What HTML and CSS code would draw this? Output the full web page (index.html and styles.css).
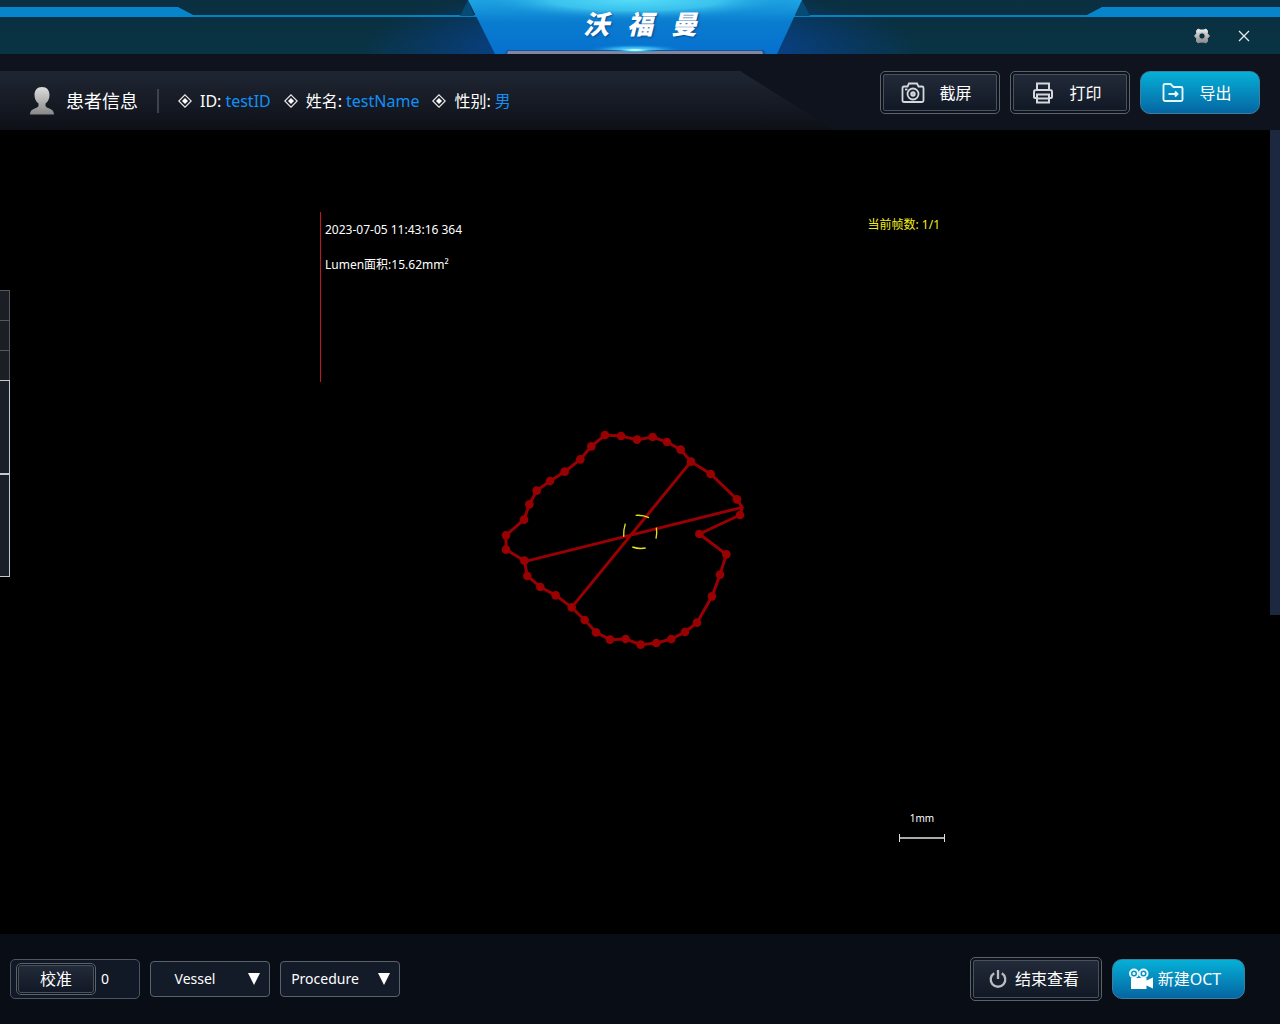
FILE: index.html
```html
<!DOCTYPE html>
<html lang="zh-CN">
<head>
<meta charset="utf-8">
<meta name="viewport" content="width=device-width, initial-scale=1">
<title>沃福曼 OCT</title>
<link rel="stylesheet" href="styles.css">
</head>
<body>
<header class="titlebar">
  <div class="wing wing-left"></div>
  <div class="plate">
    <svg class="plate-art" viewBox="0 0 360 54" aria-hidden="true">
      <defs>
        <linearGradient id="plate" x1="0" y1="0" x2="0" y2="1"><stop offset="0" stop-color="#1fa8e4"/><stop offset=".4" stop-color="#0a7dcf"/><stop offset="1" stop-color="#0670cf"/></linearGradient>
        <radialGradient id="sky"><stop offset="0" stop-color="#55dcf8"/><stop offset=".5" stop-color="#40c8f0" stop-opacity=".85"/><stop offset="1" stop-color="#0878cd" stop-opacity="0"/></radialGradient>
        <radialGradient id="flare"><stop offset="0" stop-color="#fff"/><stop offset=".25" stop-color="#9cf0ff"/><stop offset=".55" stop-color="#27b4ef" stop-opacity=".7"/><stop offset="1" stop-color="#0670cf" stop-opacity="0"/></radialGradient>
      </defs>
      <path d="M8 0 0 16H14Z" fill="#064a78"/><path d="M342 0l8 16h-15Z" fill="#064a78"/>
      <path d="M8 0H342L317 54H35Z" fill="url(#plate)"/>
      <ellipse cx="175" cy="0" rx="170" ry="21" fill="url(#sky)"/>
      <ellipse cx="175" cy="50" rx="50" ry="6" fill="url(#flare)"/>
      <path d="M45 54l2-4H304l2 4Z" fill="#17529a"/><path d="M47 54l1-3H302l1 3Z" fill="#82879f"/>
      <ellipse cx="175" cy="50" rx="26" ry="3" fill="url(#flare)"/>
    </svg>
    <h1 class="brand"><span>沃</span><span>福</span><span>曼</span></h1>
  </div>
  <div class="wing wing-right">
    <button class="icon-button" type="button" aria-label="设置">
      <svg width="16" height="16" viewBox="0 0 16 16"><defs><linearGradient id="gear" x1="0" y1="0" x2="0" y2="1"><stop offset="0" stop-color="#eee"/><stop offset="1" stop-color="#888"/></linearGradient></defs><path fill="url(#gear)" stroke="url(#gear)" stroke-linejoin="round" fill-rule="evenodd" d="M4 1 6 2H10L12 1 13.500 3 13.300 5.500 15.400 8 13.300 10.500 13.500 13.500 12 15 10 14.200H6L4 15 2.500 13.500 2.700 10.500 .6 8 2.700 5.500 2.500 3ZM8 4.800a3.200 3.200 0 1 0 0 6.400a3.200 3.200 0 1 0 0-6.400Z"/></svg>
    </button>
    <button class="icon-button" type="button" aria-label="关闭">
      <svg width="12" height="12" viewBox="0 0 12 12"><path d="M1 1l10 10M11 1 1 11" stroke="#e4ecef" stroke-width="1.300"/></svg>
    </button>
  </div>
</header>

<section class="toolbar">
  <div class="patient">
    <svg width="26" height="28" viewBox="0 0 26 28" aria-hidden="true"><defs><linearGradient id="person" x1="0" y1="0" x2="0" y2="1"><stop offset="0" stop-color="#ddd"/><stop offset="1" stop-color="#888"/></linearGradient></defs><path fill="url(#person)" d="M13 0C8 0 5.500 3.500 5.500 8c0 4 1.500 6.500 4 8.500V19C8 22 1 21 1 27.500H25C25 21 18 22 16.500 19V16.500C19 14.500 20.500 12 20.500 8 20.500 3.500 18 0 13 0Z"/></svg>
    <h2 class="patient-title">患者信息</h2>
    <dl class="facts">
      <div class="fact"><svg class="diamond" viewBox="0 0 14 14" aria-hidden="true"><path d="M7 .8 13.200 7 7 13.200 .8 7Z" fill="none" stroke="#e8e8ea" stroke-width="1.200"/><path d="M7 4l3 3-3 3-3-3Z" fill="#fff"/></svg><dt>ID:</dt><dd>testID</dd></div>
      <div class="fact"><svg class="diamond" viewBox="0 0 14 14" aria-hidden="true"><path d="M7 .8 13.200 7 7 13.200 .8 7Z" fill="none" stroke="#e8e8ea" stroke-width="1.200"/><path d="M7 4l3 3-3 3-3-3Z" fill="#fff"/></svg><dt>姓名:</dt><dd>testName</dd></div>
      <div class="fact"><svg class="diamond" viewBox="0 0 14 14" aria-hidden="true"><path d="M7 .8 13.200 7 7 13.200 .8 7Z" fill="none" stroke="#e8e8ea" stroke-width="1.200"/><path d="M7 4l3 3-3 3-3-3Z" fill="#fff"/></svg><dt>性别:</dt><dd>男</dd></div>
    </dl>
  </div>
  <div class="actions">
    <button class="button framed action" type="button">
      <svg width="24" height="22" viewBox="0 0 24 22" fill="none" stroke="#d5d8dd" stroke-width="1.800"><path d="M3 4.500H6.500L8 1.500h8l1.500 3H21q1.500 0 1.500 1.500V18.500Q22.500 20 21 20H3Q1.500 20 1.500 18.500V6Q1.500 4.500 3 4.500Z"/><circle cx="12" cy="12" r="5.500"/><circle cx="12" cy="12" r="1.800" fill="#aeb4bc"/><path d="M4 7.500h2.500"/></svg>
      截屏
    </button>
    <button class="button framed action" type="button">
      <svg width="24" height="22" viewBox="0 0 24 22" fill="none" stroke="#d5d8dd" stroke-width="2"><path d="M6 8V1.500h12V8M6 16H4Q3 16 3 15V10Q3 8 5 8h14Q21 8 21 10v5q0 1-1 1h-2"/><path d="M6 12.500h12V20.500H6ZM6 16.500h12"/></svg>
      打印
    </button>
    <button class="button primary action" type="button">
      <svg width="24" height="22" viewBox="0 0 24 22" fill="none" stroke="#e5f7fc" stroke-width="1.900"><path d="M4 2H9.500L12.500 5H20q1.500 0 1.500 1.500V17.500Q21.500 19 20 19H4Q2.500 19 2.500 17.500v-14Q2.500 2 4 2Z"/><path d="M7.500 12h9M14 9.500l2.500 2.500-2.500 2.500"/></svg>
      导出
    </button>
  </div>
</section>

<main class="stage">
  <aside class="drawer" aria-label="侧栏">
    <div class="slot"></div><div class="slot"></div><div class="slot"></div>
    <div class="pane"></div><div class="pane"></div>
  </aside>
  <figure class="scan">
    <svg class="scan-drawing" viewBox="0 0 640 640" role="img" aria-label="管腔轮廓">
      <defs><marker id="dot" markerUnits="userSpaceOnUse" markerWidth="28" markerHeight="28" refX="14" refY="14"><circle cx="14" cy="14" r="13" fill="#980002"/></marker></defs>
      <path d="M.5 0V170" stroke="#c8141c"/>
      <svg x="170" y="208" width="270" height="240" viewBox="0 0 810 720" fill="none" stroke="#980002" stroke-width="9">
        <polyline marker-start="url(#dot)" marker-mid="url(#dot)" marker-end="url(#dot)" points="741,238 662,162 603,125 572,89 531,66 488,51 441,59 393,48 345,45 304,79 271,118 224,155 180,183 140,212 118,253 102,299 48,346 48,389 103,422 112,468 151,501 197,526 245,562 284,600 318,637 360,659 407,657 452,674 499,669 544,657 585,636 621,608 666,529 690,464 709,403 628,342 750,285"/>
        <path d="M741 238 757 262 750 285M757 262 103 425M603 125 245 562" stroke-linejoin="round"/>
        <path stroke="#e6e020" stroke-width="4" d="M437 286Q458 284 477 293M406 311Q400 330 401 350M499 323Q502 340 498 356M427 381Q447 388 467 384"/>
      </svg>
    </svg>
    <div class="scan-notes">
      <div class="scan-top">
        <div class="readings"><time datetime="2023-07-05T11:43:16.364">2023-07-05 11:43:16 364</time><span>Lumen面积:15.62mm²</span></div>
        <div class="frames">当前帧数: 1/1</div>
      </div>
      <div class="scale"><span>1mm</span><div class="scale-bar"></div></div>
    </div>
  </figure>
  <div class="rail"></div>
</main>

<footer class="controls">
  <div class="calibrate">
    <button class="button framed calibrate-button" type="button">校准</button>
    <input class="calibrate-value" type="text" value="0" aria-label="校准值">
  </div>
  <div class="picker"><select aria-label="Vessel"><option>Vessel</option></select></div>
  <div class="picker"><select aria-label="Procedure"><option>Procedure</option></select></div>
  <div class="session">
    <button class="button framed finish" type="button">
      <svg width="18" height="20" viewBox="0 0 18 20" fill="none" stroke="#b9bcc2" stroke-width="2.300"><path d="M5.200 4.200A7.300 7.300 0 1 0 12.800 4.200M9 1V10"/></svg>
      结束查看
    </button>
    <button class="button primary start" type="button">
      <svg width="26" height="22" viewBox="0 0 26 22"><g fill="none" stroke="#eefaff" stroke-width="2"><circle cx="6" cy="5.500" r="4"/><circle cx="15.500" cy="5.500" r="4"/></g><g fill="#fff"><circle cx="6" cy="5.500" r="1.500"/><circle cx="15.500" cy="5.500" r="1.500"/><path d="M3 10H18.500V12.500L25 9.500V20.500L18.500 17.500V21H3Z"/></g></svg>
      新建OCT
    </button>
  </div>
</footer>
</body>
</html>
```

FILE: styles.css
```css
* { box-sizing: border-box; }

body {
  margin: 0;
  min-height: 100vh;
  display: flex;
  flex-direction: column;
  background: #000;
  color: #fff;
  font: 16px/24px "Noto Sans", "Noto Sans CJK SC", sans-serif;
}

svg { display: block; flex: none; }
button, input, select { font: inherit; color: inherit; margin: 0; }
h1, h2, dl, dd, figure { margin: 0; }

/* Title bar */
.titlebar {
  height: 54px;
  display: grid;
  grid-template-columns: 1fr 360px 1fr;
  background:
    linear-gradient(#0682c4, #0682c4) 0 15px / 100% 2px no-repeat,
    radial-gradient(ellipse 280px 70px at 50% 100%, #08449a 0, #083f80 50%, transparent 100%),
    linear-gradient(#0a2f40, #093344);
}
.wing { display: flex; }
.wing::before {
  content: "";
  width: 195px;
  height: 10px;
  margin-top: 7px;
  background: #0785cc;
  clip-path: polygon(0 0, 178px 0, 195px 90%, 195px 100%, 0 100%);
}
.wing-right {
  display: grid;
  grid-template-columns: 1fr 32px 32px;
  column-gap: 10px;
  padding-right: 20px;
  align-items: end;
}
.wing-right::before {
  grid-area: 1 / 1 / 2 / 4;
  justify-self: end;
  align-self: start;
  margin-right: -20px;
  clip-path: polygon(17px 0, 100% 0, 100% 100%, 0 100%, 0 90%);
}
.icon-button {
  grid-row: 1;
  height: 36px;
  padding: 0;
  border: 0;
  background: none;
  display: grid;
  place-items: center;
}
.icon-button:first-of-type { grid-column: 2; }
.icon-button:last-of-type { grid-column: 3; }
.plate { display: grid; }
.plate-art { grid-area: 1 / 1; width: 360px; height: 54px; }
.brand {
  grid-area: 1 / 1;
  z-index: 1;
  display: flex;
  justify-content: center;
  gap: 18px;
  font: italic 900 26px/46px "Noto Sans CJK SC", sans-serif;
  text-shadow: 1px 1px 2px #0a4a90;
}

/* Patient strip and actions */
.toolbar {
  height: 76px;
  padding: 17px 20px 0 0;
  display: flex;
  justify-content: space-between;
  background: #0e131d;
}
.patient {
  flex: 0 1 834px;
  display: flex;
  align-items: center;
  padding-left: 29px;
  background: linear-gradient(#1f2633, #0e1017);
  clip-path: polygon(0 0, calc(100% - 94px) 0, 100% 100%, 0 100%);
}
.patient-title {
  margin-left: 11px;
  padding-right: 19px;
  border-right: 2px solid #3d424c;
  font-size: 18px;
  font-weight: 400;
}
.facts { display: flex; gap: 13px; margin-left: 19px; }
.fact { display: flex; align-items: center; gap: 4px; white-space: nowrap; }
.fact dd { color: #1390f5; }
.diamond { width: 14px; height: 14px; margin-right: 4px; }
.actions { display: flex; gap: 10px; }

.button {
  display: flex;
  align-items: center;
  justify-content: center;
  padding: 0;
  white-space: nowrap;
}
.framed {
  border: 1px solid #5c626c;
  border-radius: 5px;
  background: linear-gradient(#232c3b, #101724) padding-box;
  outline: 1px solid #4b515b;
  outline-offset: -4px;
  box-shadow: inset 0 0 0 2px #0d121b;
}
.primary {
  border: 1px solid #3d7f9c;
  border-radius: 10px;
  background: linear-gradient(#05b0d6, #0565a3);
}
.action { width: 120px; height: 43px; gap: 14px; padding-right: 7px; }

/* Scan area */
.stage {
  flex: 1;
  display: grid;
  grid-template-columns: 10px 1fr 10px;
}
.drawer { padding-top: 160px; }
.slot, .pane {
  background: #1b1e24;
  border: solid #55575c;
  border-width: 1px 1px 0 0;
  height: 30px;
}
.pane {
  height: 94px;
  background: #1a2027;
  border: 1px solid #c5c9d2;
  border-left: 0;
}
.pane:last-child { height: 103px; }
.rail { height: 485px; background: #1c2740; }
.scan {
  width: 640px;
  max-width: 100%;
  aspect-ratio: 1;
  display: grid;
  place-self: center;
}
.scan-drawing { grid-area: 1 / 1; width: 100%; }
.scan-notes {
  grid-area: 1 / 1;
  display: flex;
  flex-direction: column;
  justify-content: space-between;
  font-size: 12px;
  line-height: 16px;
}
.scan-top { display: flex; justify-content: space-between; padding: 5px 20px 0 5px; }
.readings { display: flex; flex-direction: column; gap: 19px; padding-top: 5px; }
.frames { color: #f2ee1c; }
.scale {
  align-self: flex-end;
  width: 46px;
  margin: 0 15px 10px 0;
  text-align: center;
  font-size: 10px;
}
.scale-bar {
  height: 8px;
  margin-top: 8px;
  border: solid #ddd;
  border-width: 0 1px;
  background: linear-gradient(#aaa, #aaa) 0 3px / 100% 2px no-repeat;
}

/* Bottom controls */
.controls {
  height: 90px;
  padding: 0 35px 0 10px;
  display: flex;
  align-items: center;
  gap: 10px;
  background: #090d15;
  font-size: 14px;
}
.calibrate {
  width: 130px;
  height: 40px;
  padding-left: 5px;
  display: flex;
  align-items: center;
  border: 1px solid #4c5560;
  border-radius: 5px;
  background: #111927;
}
.calibrate-button { width: 80px; height: 32px; font-size: 16px; outline-offset: -3px; }
.calibrate-value {
  flex: 1;
  min-width: 0;
  padding: 0 5px;
  border: 0;
  background: none;
}
.picker { display: grid; align-items: center; width: 120px; height: 36px; }
.picker select {
  grid-area: 1 / 1;
  width: 100%;
  height: 100%;
  padding: 0 30px 0 0;
  appearance: none;
  border: 1px solid #59616b;
  border-radius: 4px;
  background: #131b29;
  text-align-last: center;
}
.picker::after {
  content: "";
  grid-area: 1 / 1;
  justify-self: end;
  width: 12px;
  height: 12px;
  margin-right: 10px;
  background: #fff;
  clip-path: polygon(0 0, 100% 0, 50% 100%);
  pointer-events: none;
}
.session { margin-left: auto; display: flex; align-items: center; gap: 10px; }
.finish { width: 132px; height: 44px; gap: 8px; padding-right: 4px; font-size: 16px; }
.start { width: 133px; height: 40px; gap: 4px; padding-right: 8px; font-size: 16px; }
```
